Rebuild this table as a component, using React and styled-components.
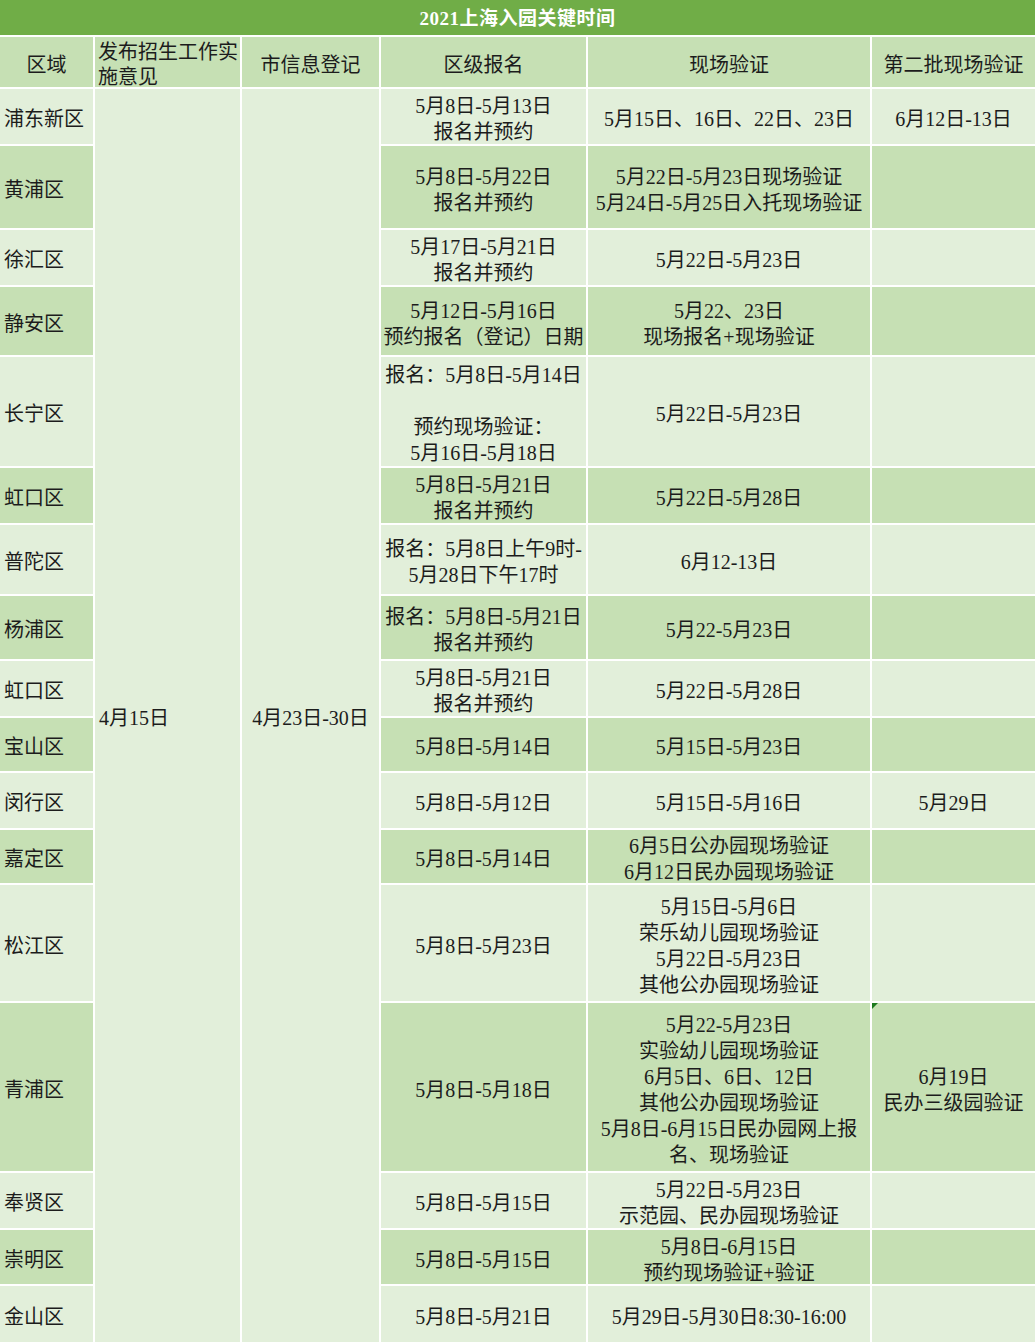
import React from 'react';
import styled, { createGlobalStyle } from 'styled-components';

const GlobalStyle = createGlobalStyle`
  html, body {
    margin: 0;
    padding: 0;
    background: #ffffff;
  }
  body {
    font-family: "Liberation Serif", "Noto Sans CJK SC", serif;
  }
`;

const TONES = {
  dark: '#c6e0b4',
  light: '#e2efda',
};

// district, signup, onsite, second batch, row tone, row height, comment mark
const rows = [
  ['浦东新区', '5月8日-5月13日\n报名并预约', '5月15日、16日、22日、23日', '6月12日-13日', 'light', 55],
  ['黄浦区', '5月8日-5月22日\n报名并预约', '5月22日-5月23日现场验证\n5月24日-5月25日入托现场验证', '', 'dark', 82],
  ['徐汇区', '5月17日-5月21日\n报名并预约', '5月22日-5月23日', '', 'light', 55],
  ['静安区', '5月12日-5月16日\n预约报名（登记）日期', '5月22、23日\n现场报名+现场验证', '', 'dark', 68],
  ['长宁区', '报名：5月8日-5月14日\n\n预约现场验证：\n5月16日-5月18日', '5月22日-5月23日', '', 'light', 109],
  ['虹口区', '5月8日-5月21日\n报名并预约', '5月22日-5月28日', '', 'dark', 55],
  ['普陀区', '报名：5月8日上午9时-\n5月28日下午17时', '6月12-13日', '', 'light', 69],
  ['杨浦区', '报名：5月8日-5月21日\n报名并预约', '5月22-5月23日', '', 'dark', 63],
  ['虹口区', '5月8日-5月21日\n报名并预约', '5月22日-5月28日', '', 'light', 55],
  ['宝山区', '5月8日-5月14日', '5月15日-5月23日', '', 'dark', 53],
  ['闵行区', '5月8日-5月12日', '5月15日-5月16日', '5月29日', 'light', 55],
  ['嘉定区', '5月8日-5月14日', '6月5日公办园现场验证\n6月12日民办园现场验证', '', 'dark', 53],
  ['松江区', '5月8日-5月23日', '5月15日-5月6日\n荣乐幼儿园现场验证\n5月22日-5月23日\n其他公办园现场验证', '', 'light', 116],
  ['青浦区', '5月8日-5月18日', '5月22-5月23日\n实验幼儿园现场验证\n6月5日、6日、12日\n其他公办园现场验证\n5月8日-6月15日民办园网上报\n名、现场验证', '6月19日\n民办三级园验证', 'dark', 168, true],
  ['奉贤区', '5月8日-5月15日', '5月22日-5月23日\n示范园、民办园现场验证', '', 'light', 55],
  ['崇明区', '5月8日-5月15日', '5月8日-6月15日\n预约现场验证+验证', '', 'dark', 54],
  ['金山区', '5月8日-5月21日', '5月29日-5月30日8:30-16:00', '', 'light', 56],
];

const Table = styled.div`
  display: grid;
  grid-template-columns: 93px 145px 137px 205px 282px 1fr;
  grid-template-rows: 35px 50px ${(p) => p.$rows.map((h) => `${h}px`).join(' ')};
  gap: 2px;
  width: 1035px;
  height: 1342px;
  overflow: hidden;
  background: #ffffff;
  color: #1c1c1c;
  font-size: 20px;
  line-height: 26px;
`;

const Title = styled.div`
  grid-column: 1 / -1;
  display: flex;
  align-items: center;
  justify-content: center;
  padding-top: 2px;
  background: #70ad47;
  color: #ffffff;
  font-weight: bold;
  font-size: 19px;
  letter-spacing: 0.5px;
`;

const Cell = styled.div`
  position: relative;
  display: flex;
  align-items: center;
  justify-content: ${(p) => (p.$align === 'left' ? 'flex-start' : 'center')};
  text-align: ${(p) => (p.$align === 'left' ? 'left' : 'center')};
  padding: 5px ${(p) => (p.$align === 'left' ? '4px' : '2px')} 0;
  background: ${(p) => TONES[p.$tone]};
  white-space: pre;
  ${(p) => p.$span && `grid-row: span ${p.$span};`}
`;

const HeadCell = styled(Cell)`
  padding-top: 6px;
  padding-left: ${(p) => (p.$align === 'left' ? '3px' : '2px')};
  line-height: 25px;
`;

const CommentMark = styled.span`
  position: absolute;
  top: 0;
  left: 0;
  width: 0;
  height: 0;
  border-top: 6px solid #1e7a1e;
  border-right: 6px solid transparent;
`;

export default function App() {
  return (
    <>
      <GlobalStyle />
      <Table $rows={rows.map((r) => r[5])}>
        <Title>2021上海入园关键时间</Title>

        <HeadCell $tone="dark">区域</HeadCell>
        <HeadCell $tone="dark" $align="left">{'发布招生工作实\n施意见'}</HeadCell>
        <HeadCell $tone="dark">市信息登记</HeadCell>
        <HeadCell $tone="dark">区级报名</HeadCell>
        <HeadCell $tone="dark">现场验证</HeadCell>
        <HeadCell $tone="dark">第二批现场验证</HeadCell>

        {rows.map(([district, signup, onsite, second, tone, , mark], i) => (
          <React.Fragment key={i}>
            <Cell $tone={tone} $align="left">{district}</Cell>
            {i === 0 && (
              <>
                <Cell $tone="light" $align="left" $span={rows.length}>4月15日</Cell>
                <Cell $tone="light" $span={rows.length}>4月23日-30日</Cell>
              </>
            )}
            <Cell $tone={tone}>{signup}</Cell>
            <Cell $tone={tone}>{onsite}</Cell>
            <Cell $tone={tone}>
              {mark && <CommentMark />}
              {second}
            </Cell>
          </React.Fragment>
        ))}
      </Table>
    </>
  );
}
